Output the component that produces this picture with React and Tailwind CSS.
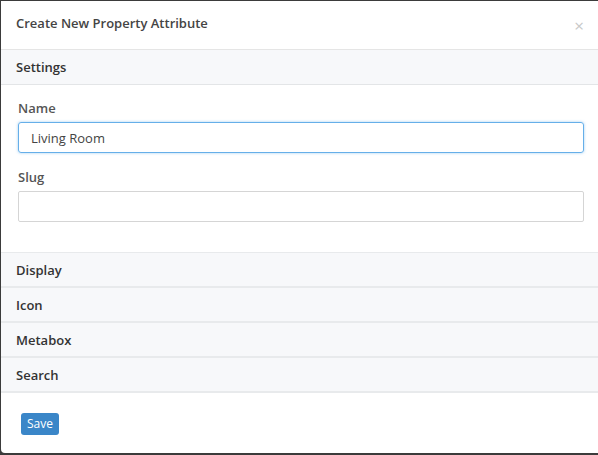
import React from 'react';

const sections = ['Display', 'Icon', 'Metabox', 'Search'];

const App = () => {
  return (
    <div
      className="w-[598px] h-[455px] bg-[#3b3b3b] pt-px pl-px pb-[2px] overflow-hidden"
      style={{ fontFamily: '"Open Sans", "Liberation Sans", sans-serif' }}
    >
      <div className="h-full bg-white rounded-bl-[4px] flex flex-col">
        <div className="h-[49px] flex items-center justify-between pl-[15px] pr-[14px] border-b border-[#e5e5e5]">
          <h2 className="text-[13px] font-semibold text-[#444] -mt-[3px]">Create New Property Attribute</h2>
          <span className="text-[#c8c8c8] text-[17px] leading-none">×</span>
        </div>

        <div className="h-[35px] flex items-center px-[15px] pt-[1px] bg-[#f7f8fa] border-b border-[#e3e5e7]">
          <span className="text-[13px] font-semibold text-[#333]">Settings</span>
        </div>

        <div className="px-[17px] pt-[14px] pb-[30px] border-b border-[#e8eaec]">
          <label className="block text-[13px] font-semibold text-[#555] leading-[18px] mb-[5px]">Name</label>
          <input
            defaultValue="Living Room"
            className="w-[566px] h-[31px] px-[12px] text-[13px] text-[#444] border border-[#66afe9] rounded-[3px] outline-none shadow-[0_0_3px_rgba(102,175,233,0.6)]"
          />
          <label className="block text-[13px] font-semibold text-[#555] leading-[18px] mt-[15px] mb-[5px]">Slug</label>
          <input className="w-[566px] h-[31px] px-[12px] text-[13px] border border-[#d5d5d5] rounded-[2px] outline-none" />
        </div>

        {sections.map((s) => (
          <div key={s} className="h-[35px] flex items-center px-[15px] pt-[2px] bg-[#f7f8fa] border-b-2 border-[#e8eaec]">
            <span className="text-[13px] font-semibold text-[#333]">{s}</span>
          </div>
        ))}

        <div className="px-[20px] pt-[17px]">
          <button className="h-[22px] px-[6px] bg-[#3a86c8] text-white text-[12px] rounded-[3px] leading-none">
            Save
          </button>
        </div>
      </div>
    </div>
  );
};

export default App;
